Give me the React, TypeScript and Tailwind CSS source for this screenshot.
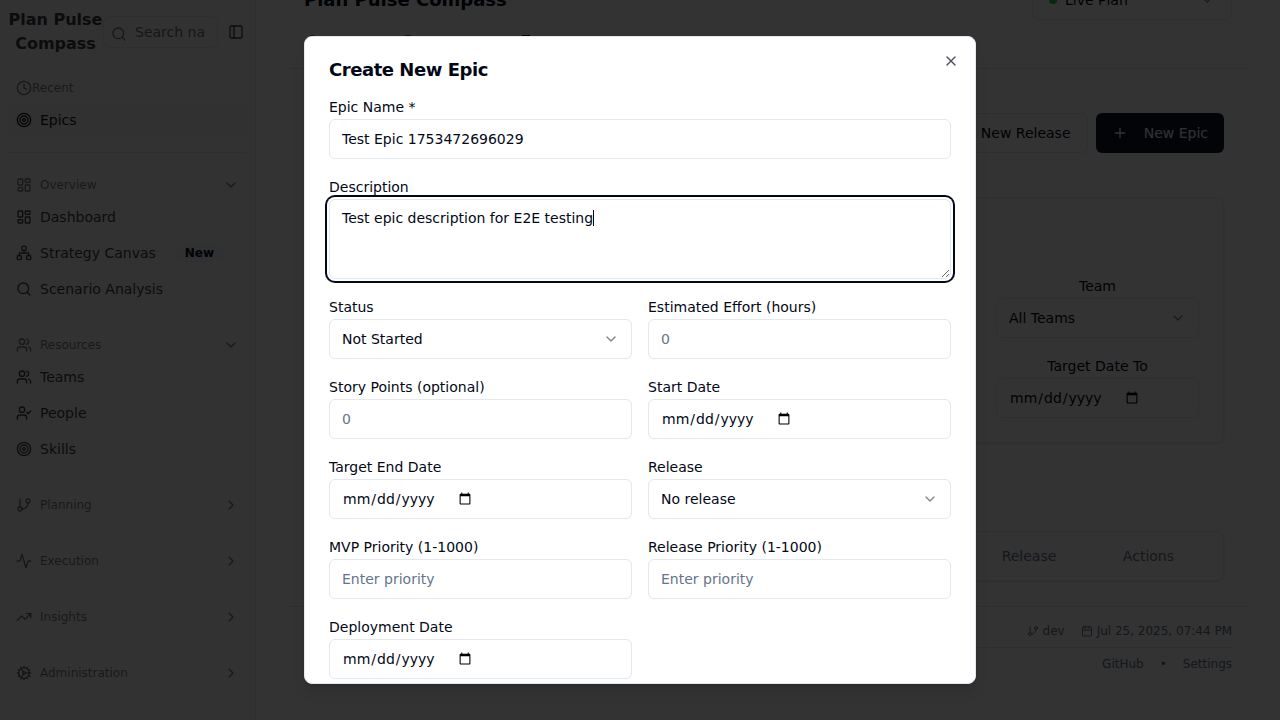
import React from 'react';
import {
  Activity, Calendar, ChevronDown, ChevronRight, Clock, Cog, GitBranch, LayoutDashboard,
  Network, PanelLeft, Plus, Search, Target, TrendingUp, UserCheck, Users, X,
} from 'lucide-react';

const control = 'flex h-10 w-full rounded-md border border-[#e2e8f0] bg-white px-3 py-2 text-sm placeholder:text-[#64748b]';

function Field({ label, children }: { label: string; children: React.ReactNode }) {
  return (
    <div className="h-16">
      <label className="block h-6 text-sm leading-6">{label}</label>
      {children}
    </div>
  );
}

function Select({ value }: { value: string }) {
  return (
    <button className="flex h-10 w-full items-center justify-between rounded-md border border-[#e2e8f0] bg-white px-3 py-2 text-sm">
      <span>{value}</span>
      <ChevronDown className="h-4 w-4 opacity-50" />
    </button>
  );
}

function NavItem({ icon: Icon, label, badge, active }: { icon: React.ElementType; label: string; badge?: string; active?: boolean }) {
  return (
    <div className={active ? 'flex h-8 items-center gap-2 rounded-md bg-[#f4f4f5] px-2 text-sm text-[#18181b]' : 'flex h-8 items-center gap-2 rounded-md px-2 text-sm text-[#3f3f46]'}>
      <Icon className="h-4 w-4 shrink-0" />
      <span>{label}</span>
      {badge && <span className="ml-3 rounded-full bg-[#f1f5f9] px-[9px] text-xs font-semibold leading-[18px] text-[#020817]">{badge}</span>}
    </div>
  );
}

function Group({ icon: Icon, label, open }: { icon: React.ElementType; label: string; open?: boolean }) {
  return (
    <div className="flex h-8 items-center gap-2 px-2 text-xs text-[#3f3f46]/70">
      <Icon className="h-4 w-4" />
      <span className="flex-1">{label}</span>
      {open ? <ChevronDown className="h-4 w-4" /> : <ChevronRight className="h-4 w-4" />}
    </div>
  );
}

function Sidebar() {
  return (
    <aside className="h-[720px] w-64 shrink-0 overflow-hidden border-r border-[#e5e7eb] bg-[#fafafa] text-[#3f3f46]">
      <div className="flex h-16 items-center pl-2 pr-2.5">
        <div className="w-[95px] shrink-0 text-center text-base font-bold leading-6">Plan Pulse Compass</div>
        <div className="flex h-8 w-[115px] shrink-0 items-center gap-2 rounded-md border border-[#e5e7eb] pl-[7px] text-sm text-[#64748b]">
          <Search className="mt-1 h-4 w-4 shrink-0" />
          <span className="whitespace-nowrap">Search na</span>
        </div>
        <PanelLeft className="ml-2.5 h-4 w-4 shrink-0" />
      </div>
      <div className="px-2 pt-2">
        <div className="flex h-8 items-center px-2 text-xs text-[#3f3f46]/70"><Clock className="h-4 w-4" />Recent</div>
        <NavItem icon={Target} label="Epics" active />
      </div>
      <div className="mx-2 mt-4 h-px bg-[#e5e7eb]" />
      <div className="px-2 pt-4">
        <Group icon={LayoutDashboard} label="Overview" open />
        <div className="flex flex-col gap-1">
          <NavItem icon={LayoutDashboard} label="Dashboard" />
          <NavItem icon={Network} label="Strategy Canvas" badge="New" />
          <NavItem icon={Search} label="Scenario Analysis" />
        </div>
      </div>
      <div className="px-2 pt-6">
        <Group icon={Users} label="Resources" open />
        <div className="flex flex-col gap-1">
          <NavItem icon={Users} label="Teams" />
          <NavItem icon={UserCheck} label="People" />
          <NavItem icon={Target} label="Skills" />
        </div>
      </div>
      <div className="flex flex-col gap-6 px-2 pt-6">
        <Group icon={GitBranch} label="Planning" />
        <Group icon={Activity} label="Execution" />
        <Group icon={TrendingUp} label="Insights" />
        <Group icon={Cog} label="Administration" />
      </div>
    </aside>
  );
}

function Main() {
  return (
    <main className="flex h-[720px] flex-1 flex-col overflow-hidden px-8">
      <header className="h-[69px] shrink-0 border-b border-[#e2e8f0] px-4">
        <div className="-mt-5 flex h-10 items-center justify-between">
          <h1 className="text-lg font-semibold">Plan Pulse Compass</h1>
          <div className="flex h-10 w-[200px] items-center rounded-md border border-[#e2e8f0] px-4 text-sm">
            <span className="h-2 w-2 rounded-full bg-[#22c55e]" />
            <span className="ml-2 flex-1">Live Plan</span>
            <ChevronDown className="h-4 w-4 opacity-50" />
          </div>
        </div>
        <div className="mt-[15px] flex h-px pl-1.5">
          <span className="w-1 bg-[#020817]/60" />
          <span className="ml-[91px] w-1.5 bg-[#020817]/60" />
          <span className="ml-[111px] w-2 bg-[#020817]" />
        </div>
      </header>
      <div className="px-6">
        <div className="mt-11 flex justify-end gap-2">
          <button className="flex h-10 items-center gap-4 rounded-md border border-[#e2e8f0] pl-4 pr-[16.5px] text-sm"><Plus className="h-4 w-4" />New Release</button>
          <button className="flex h-10 w-32 items-center justify-between rounded-md bg-[#0f172a] px-4 text-sm text-[#f8fafc]"><Plus className="h-4 w-4" />New Epic</button>
        </div>
        <section className="mt-11 flex h-[246px] justify-end rounded-lg border border-[#e2e8f0] px-6 pt-[76px] shadow-sm">
          <div className="flex w-[203px] flex-col gap-4 text-center">
            <Field label="Team"><Select value="All Teams" /></Field>
            <Field label="Target Date To"><input type="date" className={control} /></Field>
          </div>
        </section>
        <section className="mt-[88px] flex h-[50px] items-center justify-end rounded-lg border border-[#e2e8f0] pb-px text-sm text-[#64748b] shadow-sm">
          <span className="mr-[66.5px]">Release</span>
          <span className="mr-[49px]">Actions</span>
        </section>
      </div>
      <footer className="mt-[25px] border-t border-[#e2e8f0] px-4 pt-4 text-xs text-[#64748b]">
        <div className="flex h-[25px] items-start justify-end gap-4 border-b border-[#e2e8f0]">
          <span className="flex items-center gap-1"><GitBranch className="h-3 w-3" />dev</span>
          <span className="flex items-center gap-1"><Calendar className="h-3 w-3" />Jul 25, 2025, 07:44 PM</span>
        </div>
        <div className="flex justify-end gap-4 pt-2"><span>GitHub</span><span>•</span><span>Settings</span></div>
      </footer>
    </main>
  );
}

function Dialog() {
  return (
    <div className="relative h-[648px] w-[672px] overflow-hidden rounded-lg border border-[#e2e8f0] bg-white p-6 shadow-lg">
      <X className="absolute right-4 top-4 h-4 w-4 opacity-70" />
      <h2 className="text-lg font-semibold leading-[18px] tracking-tight">Create New Epic</h2>
      <div className="mt-4 flex flex-col gap-4">
        <Field label="Epic Name *"><input className={control} defaultValue="Test Epic 1753472696029" /></Field>
        <div className="h-[104px]">
          <label className="block h-6 text-sm leading-6">Description</label>
          <div className="relative">
            <textarea
              className="flex min-h-20 w-full rounded-md border border-[#e2e8f0] bg-white px-3 py-2 text-sm caret-transparent outline-none ring-2 ring-[#020817] ring-offset-2"
              defaultValue="Test epic description for E2E testing"
            />
            <span className="absolute left-[264px] top-[11px] h-4 w-px bg-[#020817]" />
          </div>
        </div>
        <div className="grid grid-cols-2 gap-4">
          <Field label="Status"><Select value="Not Started" /></Field>
          <Field label="Estimated Effort (hours)"><input type="number" className={control} placeholder="0" /></Field>
          <Field label="Story Points (optional)"><input type="number" className={control} placeholder="0" /></Field>
          <Field label="Start Date"><input type="date" className={control} /></Field>
          <Field label="Target End Date"><input type="date" className={control} /></Field>
          <Field label="Release"><Select value="No release" /></Field>
          <Field label="MVP Priority (1-1000)"><input type="number" className={control} placeholder="Enter priority" /></Field>
          <Field label="Release Priority (1-1000)"><input type="number" className={control} placeholder="Enter priority" /></Field>
          <Field label="Deployment Date"><input type="date" className={control} /></Field>
        </div>
      </div>
    </div>
  );
}

export default function App() {
  return (
    <div className="relative flex h-[720px] w-[1280px] overflow-hidden bg-white font-['DejaVu_Sans',sans-serif] text-[#020817]">
      <Sidebar />
      <Main />
      <div className="absolute inset-0 flex items-center justify-center bg-black/80">
        <Dialog />
      </div>
    </div>
  );
}
